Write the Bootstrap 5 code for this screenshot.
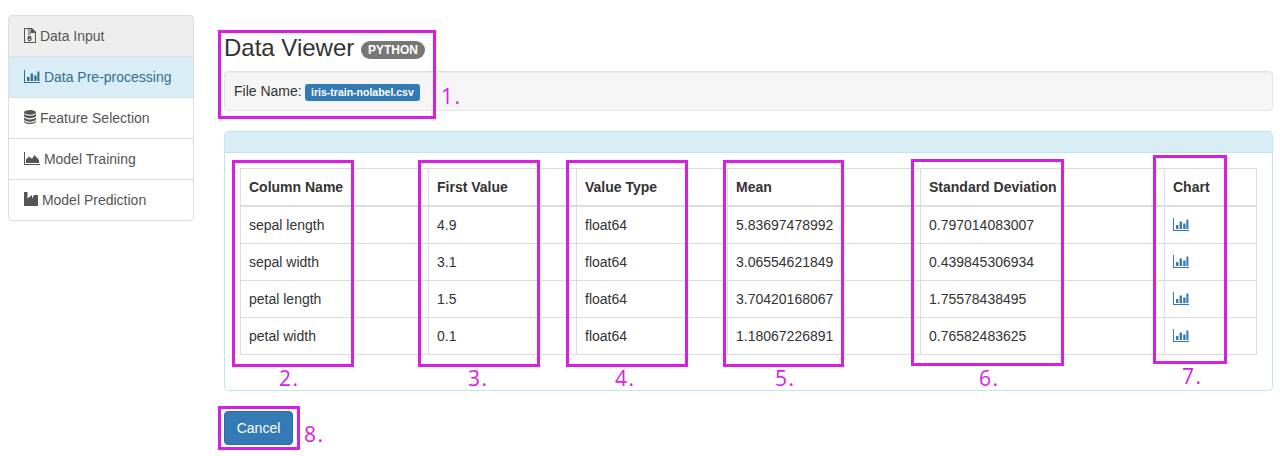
<!DOCTYPE html>
<html lang="en">
<head>
  <meta charset="UTF-8" />
  <meta name="viewport" content="width=device-width, initial-scale=1.0"/>
  <title>Data Viewer</title>
  <link href="https://cdn.jsdelivr.net/npm/bootstrap@5.3.2/dist/css/bootstrap.min.css" rel="stylesheet"/>
  <script src="https://cdn.jsdelivr.net/npm/bootstrap@5.3.2/dist/js/bootstrap.bundle.min.js"></script>
  <style>
    body {
      font-family: "Liberation Sans", Arial, sans-serif;
      font-size: 14px;
      line-height: 20px;
      color: #333;
      background: #fff;
      position: relative;
      height: 456px;
      overflow: hidden;
    }
    svg { fill: currentColor; vertical-align: baseline; }
    .side-menu { width: 186px; margin: 15px 0 0 8px; flex: none; border-radius: 4px; }
    .side-menu .list-group-item {
      padding: 10px 15px;
      height: 42px;
      margin-bottom: -1px;
      border: 1px solid #ddd;
      color: #555;
      background: #fff;
      font-size: 14px;
      line-height: 20px;
      white-space: nowrap;
    }
    .side-menu .list-group-item + .list-group-item { border-top-width: 1px; margin-top: 0; }
    .side-menu .item-current { background: #eee; }
    .side-menu .item-info { background: #d9edf7; color: #31708f; }
    .side-menu svg { margin-bottom: -1px; }
    .side-menu .item-current svg { margin-bottom: -2px; }
    .viewer { width: 1049px; margin-left: 30px; padding-top: 35px; flex: none; }
    .viewer-title { font-size: 24px; line-height: 26px; font-weight: 500; margin: 0 0 10px; color: #333; }
    .lang-pill {
      background: #777;
      color: #fff;
      font-size: 12px;
      font-weight: 700;
      line-height: 12px;
      padding: 3px 7px;
      border-radius: 10px;
      letter-spacing: 0;
      vertical-align: 2px;
    }
    .file-well {
      background: #f5f5f5;
      border: 1px solid #e3e3e3;
      border-radius: 4px;
      padding: 9px;
      height: 40px;
      margin-bottom: 20px;
      box-shadow: inset 0 1px 1px rgba(0,0,0,.05);
    }
    .file-tag {
      background: #337ab7;
      color: #fff;
      font-size: 10.5px;
      font-weight: 700;
      line-height: 11px;
      padding: 3px 6.5px;
      border-radius: 3px;
      margin-left: -1px;
      display: inline-block;
      vertical-align: 0;
    }
    .data-panel { border: 1px solid #bce8f1; border-radius: 4px; margin-bottom: 20px; height: 260px; }
    .data-panel-head { height: 20px; background: #d9edf7; border-bottom: 1px solid #bce8f1; border-radius: 3px 3px 0 0; box-sizing: content-box; }
    .data-panel-body { padding: 15px; }
    .data-table { table-layout: fixed; width: 1016px; margin: 0; border-color: #ddd; color: #333; }
    .data-table > :not(caption) > * > * { padding: 8px; line-height: 20px; border: 1px solid #ddd; box-shadow: none; color: #333; }
    .data-table thead th { border-bottom: 2px solid #ddd; font-weight: 700; }
    .data-table > tbody { border-top: 0; }
    .data-table th:nth-child(1) { width: 188px; }
    .data-table th:nth-child(2) { width: 148px; }
    .data-table th:nth-child(3) { width: 151px; }
    .data-table th:nth-child(4) { width: 193px; }
    .data-table th:nth-child(5) { width: 244px; }
    .data-table th:nth-child(6) { width: 92px; }
    .data-table td a { color: #337ab7; display: inline-block; line-height: 0; vertical-align: -1px; }
    .cancel-btn {
      background: #337ab7;
      border: 1px solid #2e6da4;
      color: #fff;
      font-size: 14px;
      line-height: 20px;
      padding: 6px 0;
      border-radius: 4px;
      height: 34px;
      width: 69px;
    }
    /* magenta annotations drawn on top of the screenshot */
    .mark-box { position: absolute; border: 3px solid #d61fe3; pointer-events: none; }
    .mark-num { position: absolute; color: #d61fe3; font-family: "Open Sans", sans-serif; font-size: 21px; line-height: 24px; letter-spacing: 1.5px; }
    .b1 { left: 218px; top: 30px; width: 218px; height: 89px; }
    .b2 { left: 232px; top: 160px; width: 122px; height: 207px; }
    .b3 { left: 418px; top: 160px; width: 122px; height: 207px; }
    .b4 { left: 566px; top: 160px; width: 122px; height: 207px; }
    .b5 { left: 723px; top: 160px; width: 121px; height: 207px; }
    .b6 { left: 911px; top: 159px; width: 153px; height: 207px; }
    .b7 { left: 1153px; top: 155px; width: 74px; height: 209px; }
    .b8 { left: 218px; top: 406px; width: 82px; height: 44px; }
    .n1 { left: 441px; top: 84px; }
    .n2 { left: 279px; top: 366px; }
    .n3 { left: 468px; top: 366px; }
    .n4 { left: 615px; top: 366px; }
    .n5 { left: 775px; top: 366px; }
    .n6 { left: 979px; top: 366px; }
    .n7 { left: 1182px; top: 364px; }
    .n8 { left: 304px; top: 422px; }
  </style>
</head>
<body>

  <svg width="0" height="0" class="position-absolute">
    <symbol id="ico-bars" viewBox="0 0 16 13">
      <path d="M0 0h1v12h15v1H0z"/>
      <path d="M3 7h2.4v4H3zM6.6 3.5H9V11H6.6zM10.2 5.5h2.4V11h-2.4zM13.4 1.5h2v9.5h-2z"/>
    </symbol>
    <symbol id="ico-area" viewBox="0 0 16 13">
      <path d="M0 0h1v12h15v1H0z"/>
      <path d="M2 11V7.5L5 4.5l3 2.2L10.5 3 15 8v3z"/>
    </symbol>
    <symbol id="ico-factory" viewBox="0 0 14 14">
      <path d="M0 0h3.5v6.5L8 3v3.5L10 3l4 0v11H0z"/>
    </symbol>
    <symbol id="ico-db" viewBox="0 0 12 14">
      <ellipse cx="6" cy="2.4" rx="6" ry="2.4"/>
      <path d="M0 3.6C.6 5 3.2 5.8 6 5.8s5.4-.8 6-2.2V6c-.6 1.4-3.2 2.2-6 2.2S.6 7.4 0 6z"/>
      <path d="M0 7.2c.6 1.4 3.2 2.2 6 2.2s5.4-.8 6-2.2v2.3c-.6 1.4-3.2 2.2-6 2.2S.6 10.9 0 9.5z"/>
      <path d="M0 10.6c.6 1.4 3.2 2.2 6 2.2s5.4-.8 6-2.2v1.2C11.4 13.2 8.8 14 6 14s-5.4-.8-6-2.2z"/>
    </symbol>
    <symbol id="ico-zip" viewBox="0 0 12 15">
      <path fill-rule="evenodd" d="M0 0h8l4 4v11H0zM1 1v13h10V5H7V1z"/>
      <path d="M4 1h1.5v1.2H4zM5.5 2.2H7v1.2H5.5zM4 3.4h1.5v1.2H4zM5.5 4.6H7v1.2H5.5zM4 5.8h1.5V7H4z"/>
      <path fill-rule="evenodd" d="M4 8h3l.6 3.2a1.8 1.8 0 1 1-4.2 0zM5.5 10.6a.8.8 0 1 0 0 1.6.8.8 0 0 0 0-1.6z"/>
    </symbol>
  </svg>

  <div class="d-flex">
    <div class="list-group side-menu">
      <a href="#" class="list-group-item item-current"><svg width="12" height="15"><use href="#ico-zip"/></svg> Data Input</a>
      <a href="#" class="list-group-item item-info"><svg width="16" height="13"><use href="#ico-bars"/></svg> Data Pre-processing</a>
      <a href="#" class="list-group-item"><svg width="12" height="14"><use href="#ico-db"/></svg> Feature Selection</a>
      <a href="#" class="list-group-item"><svg width="16" height="13"><use href="#ico-area"/></svg> Model Training</a>
      <a href="#" class="list-group-item"><svg width="14" height="14"><use href="#ico-factory"/></svg> Model Prediction</a>
    </div>

    <div class="viewer">
      <h3 class="viewer-title">Data Viewer <span class="lang-pill d-inline-block">PYTHON</span></h3>
      <div class="file-well">File Name: <span class="file-tag">iris-train-nolabel.csv</span></div>

      <div class="data-panel">
        <div class="data-panel-head"></div>
        <div class="data-panel-body">
          <table class="table table-bordered data-table">
            <thead>
              <tr><th>Column Name</th><th>First Value</th><th>Value Type</th><th>Mean</th><th>Standard Deviation</th><th>Chart</th></tr>
            </thead>
            <tbody>
              <tr><td>sepal length</td><td>4.9</td><td>float64</td><td>5.83697478992</td><td>0.797014083007</td><td><a href="#"><svg width="16" height="13"><use href="#ico-bars"/></svg></a></td></tr>
              <tr><td>sepal width</td><td>3.1</td><td>float64</td><td>3.06554621849</td><td>0.439845306934</td><td><a href="#"><svg width="16" height="13"><use href="#ico-bars"/></svg></a></td></tr>
              <tr><td>petal length</td><td>1.5</td><td>float64</td><td>3.70420168067</td><td>1.75578438495</td><td><a href="#"><svg width="16" height="13"><use href="#ico-bars"/></svg></a></td></tr>
              <tr><td>petal width</td><td>0.1</td><td>float64</td><td>1.18067226891</td><td>0.76582483625</td><td><a href="#"><svg width="16" height="13"><use href="#ico-bars"/></svg></a></td></tr>
            </tbody>
          </table>
        </div>
      </div>

      <button type="button" class="btn cancel-btn">Cancel</button>
    </div>
  </div>

  <div class="mark-box b1"></div><div class="mark-box b2"></div><div class="mark-box b3"></div><div class="mark-box b4"></div>
  <div class="mark-box b5"></div><div class="mark-box b6"></div><div class="mark-box b7"></div><div class="mark-box b8"></div>
  <span class="mark-num n1">1.</span><span class="mark-num n2">2.</span><span class="mark-num n3">3.</span><span class="mark-num n4">4.</span>
  <span class="mark-num n5">5.</span><span class="mark-num n6">6.</span><span class="mark-num n7">7.</span><span class="mark-num n8">8.</span>

</body>
</html>
